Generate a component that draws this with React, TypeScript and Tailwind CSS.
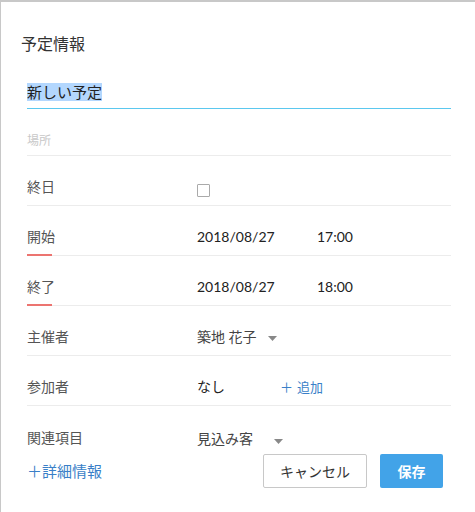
import React from 'react';

const font = { fontFamily: '"Lato", "Noto Sans CJK JP", sans-serif' };

function Caret() {
  return (
    <svg width="9" height="5" viewBox="0 0 9 5" className="inline-block">
      <path d="M0 0h9L4.5 5z" fill="#888" />
    </svg>
  );
}

function Row({
  label,
  mark,
  last,
  children,
}: {
  label: string;
  mark?: boolean;
  last?: boolean;
  children?: React.ReactNode;
}) {
  return (
    <div
      className={
        last
          ? 'relative flex h-[42px] items-end'
          : 'relative flex h-[50px] items-end border-b border-[#ececec] pb-2'
      }
    >
      <div className="w-[170px] text-[14px] leading-5 text-[#555]">{label}</div>
      <div className="flex flex-1 items-center text-[14px] leading-5 text-[#222]">{children}</div>
      {mark && <div className="absolute bottom-[-1px] left-0 h-[2px] w-[25px] bg-[#ec7470]" />}
    </div>
  );
}

export default function App() {
  return (
    <div
      className="h-[512px] w-[475px] overflow-hidden border-l border-t-2 border-[#c8c8c8] bg-white"
      style={font}
    >
      <div className="pl-5 pt-[30px] text-[16px] leading-6 text-[#333]">予定情報</div>
      <div className="ml-[26px] mr-6">
        <div className="mt-[24px] border-b border-[#5bc8ef] pb-[4px]">
          <span className="bg-[#b3d7fe] text-[15px] leading-[21px] text-[#222]">新しい予定</span>
        </div>
        <div className="mt-[24px] border-b border-[#ececec] pb-[6px] text-[12px] leading-4 text-[#c8c8c8]">
          場所
        </div>
        <Row label="終日">
          <span className="mt-[3px] block h-[13px] w-[13px] rounded-[1px] border border-[#aaa]" />
        </Row>
        <Row label="開始" mark>
          <span className="w-[120px]">2018/08/27</span>
          <span>17:00</span>
        </Row>
        <Row label="終了" mark>
          <span className="w-[120px]">2018/08/27</span>
          <span>18:00</span>
        </Row>
        <Row label="主催者">
          <span className="text-[#444]">築地 花子</span>
          <span className="ml-[11px] mt-[2px] flex">
            <Caret />
          </span>
        </Row>
        <Row label="参加者">
          <span className="w-[83px]">なし</span>
          <span className="text-[13px] text-[#3a7fc8]">＋</span>
          <span className="ml-[4px] text-[13px] text-[#3a7fc8]">追加</span>
        </Row>
        <Row label="関連項目" last>
          <span className="flex h-[16px] items-end overflow-hidden leading-[18px] text-[#444]">見込み客</span>
          <span className="ml-[21px] mt-[2px] flex">
            <Caret />
          </span>
        </Row>
        <div className="mt-[6px] flex items-center">
          <span className="flex-1 text-[15px] text-[#3a7fc8]">＋詳細情報</span>
          <button className="h-[34px] w-[104px] rounded-[2px] border border-[#c8c8c8] bg-white text-[14px] text-[#333]">
            キャンセル
          </button>
          <button className="ml-[13px] mr-2 h-[34px] w-[63px] rounded-[2px] bg-[#42a3e8] text-[14px] font-bold text-white">
            保存
          </button>
        </div>
      </div>
    </div>
  );
}
